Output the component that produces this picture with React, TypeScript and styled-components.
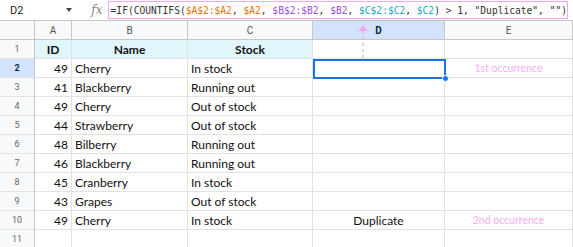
import React from "react";
import styled, { createGlobalStyle } from "styled-components";

const Global = createGlobalStyle`
  html, body { margin: 0; padding: 0; background: #fff; overflow: hidden; }
  * { box-sizing: border-box; }
`;

const Page = styled.div`
  width: 573px;
  height: 247px;
  overflow: hidden;
  background: #fff;
  font-family: "Lato", "Open Sans", sans-serif;
`;

const Toolbar = styled.div`
  height: 21px;
  display: flex;
  align-items: center;
  border-bottom: 1px solid #c7c7c7;
  background: #fff;
`;

const NameBox = styled.div`
  width: 86px;
  display: flex;
  align-items: center;
  justify-content: space-between;
  padding: 0 12px 0 10px;
  font-family: "Roboto", sans-serif;
  font-size: 11px;
  color: #222;
`;

const Caret = styled.span`
  width: 0;
  height: 0;
  border-left: 3.5px solid transparent;
  border-right: 3.5px solid transparent;
  border-top: 4px solid #444;
`;

const Fx = styled.div`
  width: 22px;
  font-family: "DejaVu Serif", serif;
  font-style: italic;
  font-size: 12px;
  color: #888;
  text-align: center;
  margin-left: 2px;
`;

const FormulaBox = styled.div`
  flex: 1;
  height: 18px;
  margin: 0 5px 0 0;
  border: 1px solid #f4a6ee;
  display: flex;
  align-items: center;
  padding-left: 2px;
  font-family: "DejaVu Sans Mono", monospace;
  font-size: 9.6px;
  color: #333;
  white-space: pre;
`;

const Ref = styled.span<{ $c: string }>`
  color: ${(p) => p.$c};
`;

const Grid = styled.div`
  position: relative;
  display: grid;
  grid-template-columns: 35px 37px 116px 125px 132px 128px;
  grid-auto-rows: 19px;
`;

const Corner = styled.div`
  background: #f8f9fa;
  border-right: 1px solid #c7c7c7;
  border-bottom: 1px solid #c7c7c7;
`;

const ColHead = styled.div<{ $active?: boolean }>`
  background: ${(p) => (p.$active ? "#d3e3fd" : "#f8f9fa")};
  border-right: 1px solid #c7c7c7;
  border-bottom: 1px solid #c7c7c7;
  display: flex;
  align-items: center;
  justify-content: center;
  font-family: "Roboto", sans-serif;
  font-size: 10px;
  color: ${(p) => (p.$active ? "#0b1f44" : "#555")};
  font-weight: ${(p) => (p.$active ? 700 : 400)};
`;

const RowHead = styled.div<{ $active?: boolean }>`
  background: ${(p) => (p.$active ? "#d3e3fd" : "#f8f9fa")};
  border-right: 1px solid #c7c7c7;
  border-bottom: 1px solid #e2e2e2;
  display: flex;
  align-items: center;
  justify-content: center;
  font-family: "Roboto", sans-serif;
  font-size: 9px;
  color: ${(p) => (p.$active ? "#0b1f44" : "#666")};
  font-weight: ${(p) => (p.$active ? 700 : 400)};
`;

const Cell = styled.div<{ $align?: string; $head?: boolean; $note?: boolean }>`
  border-right: 1px solid #e2e2e2;
  border-bottom: 1px solid #e2e2e2;
  background: ${(p) => (p.$head ? "#e0f6fa" : "#fff")};
  display: flex;
  align-items: center;
  justify-content: ${(p) =>
    p.$align === "right" ? "flex-end" : p.$align === "center" ? "center" : "flex-start"};
  padding: 0 3px;
  font-size: ${(p) => (p.$note ? "10.5px" : "12px")};
  font-weight: ${(p) => (p.$head ? 700 : 400)};
  color: ${(p) => (p.$note ? "#f7aef2" : "#111")};
  white-space: nowrap;
  overflow: hidden;
`;

const Selection = styled.div`
  position: absolute;
  left: 313px;
  top: 38px;
  width: 133px;
  height: 20px;
  border: 2px solid #1a73e8;
  pointer-events: none;
`;

const Handle = styled.div`
  position: absolute;
  right: -5px;
  bottom: -5px;
  width: 7px;
  height: 7px;
  border-radius: 50%;
  background: #1a73e8;
  border: 1px solid #fff;
`;

const Pointer = styled.svg`
  position: absolute;
  left: 358px;
  top: 4px;
`;

type Row = [string, string, string, string, string];

const rows: Row[] = [
  ["49", "Cherry", "In stock", "", "1st occurrence"],
  ["41", "Blackberry", "Running out", "", ""],
  ["49", "Cherry", "Out of stock", "", ""],
  ["44", "Strawberry", "Out of stock", "", ""],
  ["48", "Bilberry", "Running out", "", ""],
  ["46", "Blackberry", "Running out", "", ""],
  ["45", "Cranberry", "In stock", "", ""],
  ["43", "Grapes", "Out of stock", "", ""],
  ["49", "Cherry", "In stock", "Duplicate", "2nd occurrence"],
  ["", "", "", "", ""],
];

const orange = "#e37400";
const purple = "#9a4fd8";
const teal = "#1fa5c2";

export default function App() {
  return (
    <Page>
      <Global />
      <Toolbar>
        <NameBox>
          D2
          <Caret />
        </NameBox>
        <Fx>fx</Fx>
        <FormulaBox>
          {"=IF(COUNTIFS("}
          <Ref $c={orange}>$A$2:$A2</Ref>
          {", "}
          <Ref $c={orange}>$A2</Ref>
          {", "}
          <Ref $c={purple}>$B$2:$B2</Ref>
          {", "}
          <Ref $c={purple}>$B2</Ref>
          {", "}
          <Ref $c={teal}>$C$2:$C2</Ref>
          {", "}
          <Ref $c={teal}>$C2</Ref>
          {') > 1, "Duplicate", "")'}
        </FormulaBox>
      </Toolbar>
      <Grid>
        <Corner />
        <ColHead>A</ColHead>
        <ColHead>B</ColHead>
        <ColHead>C</ColHead>
        <ColHead $active>D</ColHead>
        <ColHead>E</ColHead>

        <RowHead>1</RowHead>
        <Cell $head $align="center">ID</Cell>
        <Cell $head $align="center">Name</Cell>
        <Cell $head $align="center">Stock</Cell>
        <Cell />
        <Cell />

        {rows.map((r, i) => (
          <React.Fragment key={i}>
            <RowHead $active={i === 0}>{i + 2}</RowHead>
            <Cell $align="right">{r[0]}</Cell>
            <Cell>{r[1]}</Cell>
            <Cell>{r[2]}</Cell>
            <Cell $align="center">{r[3]}</Cell>
            <Cell $align="center" $note>{r[4]}</Cell>
          </React.Fragment>
        ))}

        <Pointer width="10" height="33" viewBox="0 0 10 33">
          <polygon points="5,0 9.5,6 0.5,6" fill="#f5a3f0" />
          <line x1="5" y1="6" x2="5" y2="33" stroke="#f5a3f0" strokeWidth="1.2" strokeDasharray="3 3" />
        </Pointer>
        <Selection>
          <Handle />
        </Selection>
      </Grid>
    </Page>
  );
}
